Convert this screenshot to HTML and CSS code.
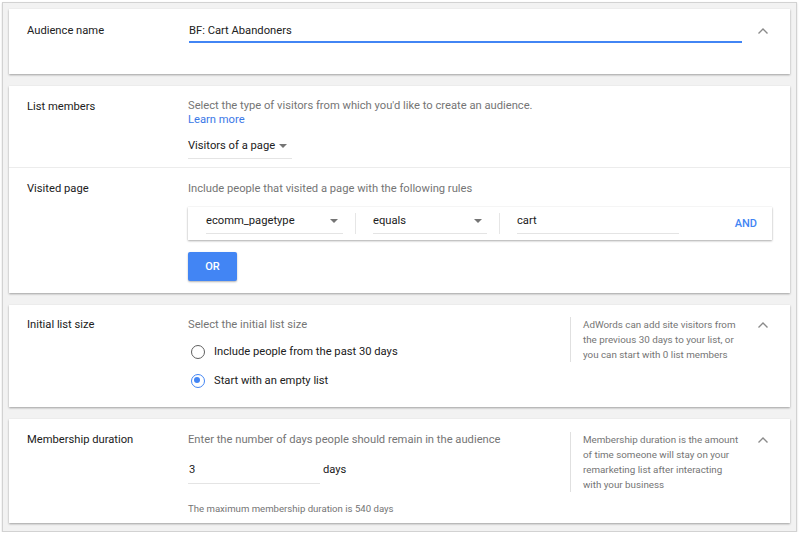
FILE: index.html
```html
<!DOCTYPE html>
<html lang="en">
<head>
<meta charset="utf-8">
<title>Audience</title>
<link rel="stylesheet" href="styles.css">
</head>
<body>
<div class="frame">
  <section class="card card-name">
    <div class="row">
      <div class="label">Audience name</div>
      <div class="content">
        <div class="name-input">BF: Cart Abandoners</div>
      </div>
      <div class="chevron"><svg width="12" height="8" viewBox="0 0 12 8"><path d="M1.5 6.5 L6 2 L10.5 6.5" fill="none" stroke="#8a8a8a" stroke-width="1.4"/></svg></div>
    </div>
  </section>

  <section class="card card-members">
    <div class="row row-members">
      <div class="label">List members</div>
      <div class="content">
        <div class="desc desc-tight">Select the type of visitors from which you'd like to create an audience.</div>
        <a class="link">Learn more</a>
        <div class="dropdown">
          <span>Visitors of a page</span>
          <span class="caret"></span>
        </div>
      </div>
    </div>
    <div class="row row-visited">
      <div class="label">Visited page</div>
      <div class="content">
        <div class="desc">Include people that visited a page with the following rules</div>
        <div class="rule">
          <div class="field field-key"><span>ecomm_pagetype</span><span class="caret"></span></div>
          <div class="sep"></div>
          <div class="field field-op"><span>equals</span><span class="caret"></span></div>
          <div class="sep"></div>
          <div class="field field-val"><span>cart</span></div>
          <div class="and">AND</div>
        </div>
        <div class="or-btn">OR</div>
      </div>
    </div>
  </section>

  <section class="card card-initial">
    <div class="row">
      <div class="label">Initial list size</div>
      <div class="content">
        <div class="desc">Select the initial list size</div>
        <div class="radio radio-first"><span class="dot"></span><span>Include people from the past 30 days</span></div>
        <div class="radio checked"><span class="dot"></span><span>Start with an empty list</span></div>
      </div>
      <div class="help">AdWords can add site visitors from the previous 30 days to your list, or you can start with 0 list members</div>
      <div class="chevron"><svg width="12" height="8" viewBox="0 0 12 8"><path d="M1.5 6.5 L6 2 L10.5 6.5" fill="none" stroke="#8a8a8a" stroke-width="1.4"/></svg></div>
    </div>
  </section>

  <section class="card card-duration">
    <div class="row">
      <div class="label">Membership duration</div>
      <div class="content">
        <div class="desc">Enter the number of days people should remain in the audience</div>
        <div class="days-row">
          <div class="days-input">3</div>
          <span class="days">days</span>
        </div>
        <div class="note">The maximum membership duration is 540 days</div>
      </div>
      <div class="help">Membership duration is the amount of time someone will stay on your remarketing list after interacting with your business</div>
      <div class="chevron"><svg width="12" height="8" viewBox="0 0 12 8"><path d="M1.5 6.5 L6 2 L10.5 6.5" fill="none" stroke="#8a8a8a" stroke-width="1.4"/></svg></div>
    </div>
  </section>
</div>
</body>
</html>
```

FILE: styles.css
```css
* { box-sizing: border-box; }
html, body { margin: 0; padding: 0; background: #ffffff; }
body {
  font-family: Roboto, "Noto Sans", "Liberation Sans", sans-serif;
  color: #212121;
  font-size: 11.2px;
  line-height: 16px;
}
.frame {
  margin: 2px 3px 0 2px;
  height: 530px;
  border: 1px solid #d2d2d2;
  background: #f2f2f2;
  box-shadow: 0 1px 2px rgba(0,0,0,0.15);
  padding: 6px 6px;
  display: flex;
  flex-direction: column;
  gap: 12px;
}
.card {
  flex: none;
  background: #ffffff;
  box-shadow: 0 1px 2px rgba(0,0,0,0.35);
}
.row {
  display: flex;
  align-items: flex-start;
  padding: 14px 0 0 18px;
}
.label {
  width: 161px;
  flex: none;
  color: #212121;
  white-space: nowrap;
}
.content {
  flex: 1;
  min-width: 0;
}
.chevron {
  width: 48px;
  flex: none;
  display: flex;
  justify-content: center;
  padding-right: 6px;
  padding-top: 4px;
}
.chevron svg { display: block; }

/* card 1 */
.card-name { height: 65px; }
.name-input {
  width: 553px;
  margin-left: 1px;
  padding-bottom: 2px;
  border-bottom: 2px solid #4285f4;
}

/* card 2 */
.desc {
  color: #757575;
  white-space: nowrap;
}
.desc-tight { line-height: 14px; }
.row-members {
  padding: 13px 18px 8px 18px;
  border-bottom: 1px solid #ececec;
}
.link {
  display: block;
  color: #3b78e7;
  line-height: 14px;
}
.dropdown {
  margin-top: 11px;
  width: 104px;
  display: flex;
  justify-content: space-between;
  align-items: center;
  padding-bottom: 4px;
  border-bottom: 1px solid #e4e4e4;
  white-space: nowrap;
}
.caret {
  flex: none;
  width: 0;
  height: 0;
  border-left: 4px solid transparent;
  border-right: 4px solid transparent;
  border-top: 4px solid #757575;
  margin-right: 5px;
}
.row-visited {
  padding: 13px 18px 12px 18px;
}
.rule {
  margin-top: 10px;
  height: 33px;
  display: flex;
  align-items: flex-start;
  padding: 6px 15px 0 18px;
  box-shadow: 0 1px 2px rgba(0,0,0,0.32), 0 0 1px rgba(0,0,0,0.1);
  background: #fff;
}
.field {
  display: flex;
  justify-content: space-between;
  align-items: center;
  padding-bottom: 4px;
  border-bottom: 1px solid #e4e4e4;
}
.field-key { width: 137px; }
.field-op { width: 114px; }
.field-val { width: 162px; }
.sep {
  width: 1px;
  height: 21px;
  background: #e6e6e6;
  margin: 0 17px 0 12px;
}
.and {
  margin-left: auto;
  margin-top: 3px;
  color: #4285f4;
  font-weight: 500;
  font-size: 11px;
}
.or-btn {
  margin-top: 12px;
  width: 49px;
  height: 29px;
  background: #4285f4;
  color: #fff;
  font-size: 11px;
  font-weight: 500;
  display: flex;
  align-items: center;
  justify-content: center;
  border-radius: 2px;
  box-shadow: 0 1px 2px rgba(0,0,0,0.3);
}

/* card 3 */
.card-initial .row { padding-bottom: 14px; padding-top: 12px; }
.help {
  width: 172px;
  flex: none;
  margin-top: 0;
  border-left: 1px solid #e0e0e0;
  padding-left: 12px;
  font-size: 9.8px;
  line-height: 15px;
  color: #757575;
}
.radio {
  display: flex;
  align-items: center;
  height: 24px;
  gap: 9px;
  margin-top: 5px;
  margin-left: 3px;
}
.radio-first { margin-top: 7px; }
.radio .dot {
  width: 14px;
  height: 14px;
  border-radius: 50%;
  border: 1.6px solid #5f5f5f;
  flex: none;
  position: relative;
}
.radio.checked .dot {
  border-color: #4285f4;
}
.radio.checked .dot::after {
  content: "";
  position: absolute;
  left: 2.4px;
  top: 2.4px;
  width: 6px;
  height: 6px;
  border-radius: 50%;
  background: #4285f4;
}

/* card 4 */
.card-duration .row { padding-top: 13px; padding-bottom: 7px; }
.days-row {
  display: flex;
  align-items: flex-start;
  margin-top: 14px;
}
.days-input {
  width: 132px;
  padding-left: 1px;
  padding-bottom: 5px;
  border-bottom: 1px solid #e4e4e4;
}
.days {
  margin-left: 3px;
}
.note {
  margin-top: 18px;
  font-size: 9.6px;
  line-height: 14px;
  color: #757575;
}
```
